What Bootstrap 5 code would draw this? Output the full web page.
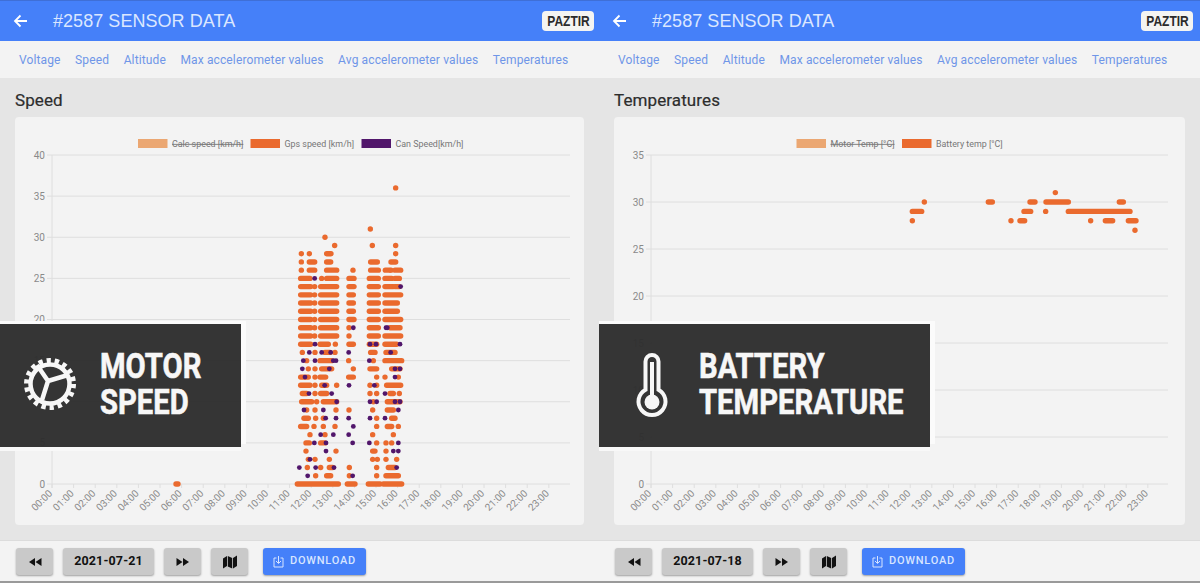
<!DOCTYPE html>
<html lang="en">
<head>
<meta charset="utf-8">
<title>Sensor data</title>
<link href="https://cdn.jsdelivr.net/npm/bootstrap@5.3.0/dist/css/bootstrap.min.css" rel="stylesheet">
<style>
html,body{height:583px;overflow:hidden;}
body{font-family:Roboto,"Liberation Sans",sans-serif;background:#e5e5e5;}
.sd-screens{width:1200px;height:583px;border-top:1px solid #3f6fd6;border-bottom:2px solid #9a9a9a;}
.sd-panel{position:relative;height:100%;background:#e5e5e5;}
.sd-left{width:599px;}
.sd-right{width:601px;}
.sd-head{flex:none;height:40px;background:#4580f9;padding:0 5px 0 13px;color:#dbe7ff;}
.sd-right .sd-head{padding-right:7px;}
.sd-title{font-family:"Liberation Sans",sans-serif;font-size:18px;letter-spacing:.05px;margin:0 0 0 25px;font-weight:400;flex:1 1 auto;line-height:40px;}
.sd-logo{width:52px;height:20px;background:#f4f4f2;border-radius:4px;color:#2b2b2b;font:700 15px/20px "Liberation Sans",sans-serif;text-align:center;white-space:nowrap;}
.sd-logo span{display:inline-block;transform:scaleX(.8);}
.sd-tabs{flex:none;height:37px;background:#f3f3f3;padding:0 19px;gap:14.5px;font-size:12px;}
.sd-tabs .nav-link{padding:0;color:#6f96e8;letter-spacing:.13px;white-space:nowrap;}
.sd-main{flex:none;height:462px;padding:13px 15px 15px;}
.sd-heading{font-size:17px;font-weight:400;color:#2d2d2d;margin:0 0 7px;line-height:19px;letter-spacing:.1px;-webkit-text-stroke:.2px #2d2d2d;}
.sd-chart{height:408px;background:#f3f3f3;border:0;border-radius:4px;overflow:hidden;}
.sd-chart svg{display:block;}
.sd-foot{flex:none;height:41px;background:#f3f3f3;border-top:1px solid #dcdcdc;padding:7px 16px 6px;gap:10px;}
.sd-btn{height:27px;width:37px;padding:0;background:#c9c9c9;border:0;border-radius:3px;box-shadow:0 1px 2px rgba(0,0,0,.35);color:#111;font-size:12.5px;font-weight:700;letter-spacing:.15px;}
.sd-date{width:91px;}
.sd-download{width:103px;margin-left:5px;background:#4580f9;color:#d8e5ff;font-size:11px;font-weight:500;letter-spacing:.75px;gap:6px;}
.sd-btn:hover{background:#c9c9c9;color:#111;}
.sd-download:hover{background:#4580f9;color:#d8e5ff;}
.sd-banner{position:absolute;top:323px;height:123px;left:0;background:rgba(46,46,46,.97);box-shadow:5px -3px 0 #fbfbfb,0 -3px 0 #fbfbfb,0 4px 0 #f8f8f8;color:#f7f7f7;}
.sd-banner-a{width:241px;}
.sd-banner-b{width:331px;}
.sd-banner-text{font-weight:700;font-size:35px;line-height:36px;transform:scaleX(.835);transform-origin:0 50%;white-space:nowrap;position:absolute;top:25px;left:100px;-webkit-text-stroke:.6px #f7f7f7;}
.sd-banner svg{position:absolute;}
.sd-ax{font:10px Roboto,sans-serif;fill:#8a8a8a;}
.sd-lg{font:8.9px Roboto,sans-serif;fill:#777;}
</style>
</head>
<body>
<div class="sd-screens d-flex">

  <section class="sd-panel sd-left d-flex flex-column">
    <header class="sd-head d-flex align-items-center">
      <svg width="15" height="14" viewBox="0 0 15 14"><path d="M14 7H2M7.5 1.5 2 7l5.500 5.500" fill="none" stroke="#fff" stroke-width="1.800"/></svg>
      <h1 class="sd-title">#2587 SENSOR DATA</h1>
      <div class="sd-logo"><span>PAZTIR</span></div>
    </header>
    <nav class="nav sd-tabs align-items-center flex-nowrap">
      <a class="nav-link" href="#">Voltage</a><a class="nav-link" href="#">Speed</a><a class="nav-link" href="#">Altitude</a><a class="nav-link" href="#">Max accelerometer values</a><a class="nav-link" href="#">Avg accelerometer values</a><a class="nav-link" href="#">Temperatures</a>
    </nav>
    <main class="sd-main">
      <h2 class="sd-heading">Speed</h2>
      <div class="card sd-chart" id="chartA"></div>
    </main>
    <footer class="sd-foot d-flex align-items-start">
      <button class="btn sd-btn d-flex align-items-center justify-content-center"><svg width="14" height="10" viewBox="0 0 14 10"><path d="M7 1v8L1 5zM13.500 1v8l-6-4z" fill="#111"/></svg></button>
      <button class="btn sd-btn sd-date">2021-07-21</button>
      <button class="btn sd-btn d-flex align-items-center justify-content-center"><svg width="14" height="10" viewBox="0 0 14 10"><path d="M.5 1v8l6-4zM7 1v8l6-4z" fill="#111"/></svg></button>
      <button class="btn sd-btn d-flex align-items-center justify-content-center"><svg width="14" height="14" viewBox="0 0 14 14"><path d="M0 3.500 4 1v10L0 13.500zM4.800 1l4.400 2v10.500L4.800 11.500zM10 3l4-2.500v10.500L10 13.500z" fill="#111"/></svg></button>
      <button class="btn sd-btn sd-download d-flex align-items-center justify-content-center"><svg width="11" height="13" viewBox="0 0 11 13"><path d="M3.500 3H1v9h9V3H7.500M5.500 1v7M3 6l2.500 2.500L8 6" fill="none" stroke="#d8e5ff" stroke-width="1"/></svg>DOWNLOAD</button>
    </footer>
    <aside class="sd-banner sd-banner-a">
      <svg style="left:20px;top:30px" width="60" height="60" viewBox="0 0 60 60">
        <circle cx="30" cy="30" r="23.500" fill="none" stroke="#f7f7f7" stroke-width="5" stroke-dasharray="4.300 3.900"/>
        <circle cx="30" cy="30" r="19.500" fill="none" stroke="#f7f7f7" stroke-width="4.500"/>
        <path d="M28 27 17 11M28 27 48 21M28 27 22 46" fill="none" stroke="#f7f7f7" stroke-width="4.500"/>
      </svg>
      <div class="sd-banner-text">MOTOR<br>SPEED</div>
    </aside>
  </section>

  <section class="sd-panel sd-right d-flex flex-column">
    <header class="sd-head d-flex align-items-center">
      <svg width="15" height="14" viewBox="0 0 15 14"><path d="M14 7H2M7.5 1.5 2 7l5.500 5.500" fill="none" stroke="#fff" stroke-width="1.800"/></svg>
      <h1 class="sd-title">#2587 SENSOR DATA</h1>
      <div class="sd-logo"><span>PAZTIR</span></div>
    </header>
    <nav class="nav sd-tabs align-items-center flex-nowrap">
      <a class="nav-link" href="#">Voltage</a><a class="nav-link" href="#">Speed</a><a class="nav-link" href="#">Altitude</a><a class="nav-link" href="#">Max accelerometer values</a><a class="nav-link" href="#">Avg accelerometer values</a><a class="nav-link" href="#">Temperatures</a>
    </nav>
    <main class="sd-main">
      <h2 class="sd-heading">Temperatures</h2>
      <div class="card sd-chart" id="chartB"></div>
    </main>
    <footer class="sd-foot d-flex align-items-start">
      <button class="btn sd-btn d-flex align-items-center justify-content-center"><svg width="14" height="10" viewBox="0 0 14 10"><path d="M7 1v8L1 5zM13.500 1v8l-6-4z" fill="#111"/></svg></button>
      <button class="btn sd-btn sd-date">2021-07-18</button>
      <button class="btn sd-btn d-flex align-items-center justify-content-center"><svg width="14" height="10" viewBox="0 0 14 10"><path d="M.5 1v8l6-4zM7 1v8l6-4z" fill="#111"/></svg></button>
      <button class="btn sd-btn d-flex align-items-center justify-content-center"><svg width="14" height="14" viewBox="0 0 14 14"><path d="M0 3.500 4 1v10L0 13.500zM4.800 1l4.400 2v10.500L4.800 11.500zM10 3l4-2.500v10.500L10 13.500z" fill="#111"/></svg></button>
      <button class="btn sd-btn sd-download d-flex align-items-center justify-content-center"><svg width="11" height="13" viewBox="0 0 11 13"><path d="M3.500 3H1v9h9V3H7.500M5.500 1v7M3 6l2.500 2.500L8 6" fill="none" stroke="#d8e5ff" stroke-width="1"/></svg>DOWNLOAD</button>
    </footer>
    <aside class="sd-banner sd-banner-b">
      <svg style="left:36px;top:29px" width="34" height="66" viewBox="0 0 34 66">
        <path d="M10.500 36.700V8.500a6.500 6.500 0 0 1 13 0V36.700a13.500 13.500 0 1 1-13 0z" fill="none" stroke="#f7f7f7" stroke-width="4"/>
        <path d="M17 9v40" stroke="#f7f7f7" stroke-width="4"/>
        <circle cx="17" cy="49" r="7.500" fill="#f7f7f7"/>
      </svg>
      <div class="sd-banner-text">BATTERY<br>TEMPERATURE</div>
    </aside>
  </section>
</div>

<script src="https://cdn.jsdelivr.net/npm/bootstrap@5.3.0/dist/js/bootstrap.bundle.min.js"></script>
<script>
const OR='#ea6a2e',PU='#51166b';
function buildChart(c){
  let s=`<svg width="${c.w}" height="408" viewBox="${c.x} 117 ${c.w} 408">`;
  const y0=484,y1=155,n=c.max/5,step=(y0-y1)/n;
  for(let i=0;i<=n;i++){
    const y=y0-i*step;
    s+=`<line x1="${c.ax-5}" x2="${c.right}" y1="${y}" y2="${y}" stroke="#dedede"/>`;
    s+=`<text class="sd-ax" x="${c.ax-7}" y="${y+3.500}" text-anchor="end">${i*5}</text>`;
  }
  s+=`<line x1="${c.ax}" x2="${c.ax}" y1="${y1}" y2="${y0+4}" stroke="#dedede"/>`;
  for(let h=0;h<24;h++){
    const x=c.ax+h*21.6;
    s+=`<line x1="${x}" x2="${x}" y1="${y0}" y2="${y0+4}" stroke="#dedede"/>`;
    s+=`<text class="sd-ax" text-anchor="end" transform="translate(${x+1} ${y0+10}) rotate(-45)">${String(h).padStart(2,'0')}:00</text>`;
  }
  c.legend.forEach(l=>{
    s+=`<rect x="${l.x}" y="139" width="29.500" height="9" fill="${l.col}"/>`;
    s+=`<text class="sd-lg" x="${l.x+34}" y="147"${l.off?' text-decoration="line-through"':''}>${l.t}</text>`;
  });
  const dot=(x,y,col,r)=>{s+=`<circle cx="${x}" cy="${y}" r="${r}" fill="${col}"/>`;};
  const seg=(a,b,y)=>{s+=`<line x1="${a}" x2="${b}" y1="${y}" y2="${y}" stroke="${OR}" stroke-width="5.400" stroke-linecap="round"/>`;};
  c.rows.forEach(r=>{
    const y=y0-r.v*(y0-y1)/c.max;
    (r.o||[]).forEach(p=>{
      const a=c.ox+(Array.isArray(p)?p[0]:p)/3, b=c.ox+(Array.isArray(p)?p[1]:p)/3;
      if(a===b)dot(a,y,OR,2.7);else seg(a,b,y);
    });
    (r.p||[]).forEach(p=>dot(c.ox+p/3,y,PU,2.4));
  });
  return s+'</svg>';
}
const speedRows=[
{v:36,o:[347]},{v:31,o:[271]},{v:30,o:[135]},
{v:29,o:[164,277,347]},
{v:28,o:[64,88,[140,153],347]},
{v:27,o:[64,[88,104],[140,152],[272,292],[333,347]]},
{v:26,o:[64,[88,104],[140,170],219,[272,295],[316,328],333,[345,362]]},
{v:25,o:[[62,90],125,[140,170],[207,222],[268,295],[315,335],[345,358]],p:[104]},
{v:24,o:[[62,92],104,[122,170],[207,222],[268,295],[315,340],[345,358]],p:[362]},
{v:23,o:[[62,92],104,[122,170],[207,220],[268,295],[315,362]]},
{v:22,o:[[62,92],104,[122,170],[207,220],[268,295],[315,352]]},
{v:21,o:[[62,92],104,[122,170],[207,220],[268,295],[315,352]]},
{v:20,o:[[62,92],104,[122,170],[207,222],[268,295],[315,362]]},
{v:19,o:[[62,92],104,[122,170],207,[268,295],[330,360]],p:[220,318,322]},
{v:18,o:[[62,92],104,[122,170],207,[268,295],[315,362]]},
{v:17,o:[[62,92],[120,145],166,[207,220],[268,290],[315,350]],p:[105,270,288,360]},
{v:16,o:[67,105,[135,150],165,[272,285],[318,345]],p:[88,125,152,206,332]},
{v:15,o:[80,[120,155],206,280,[315,365]],p:[70,105,160,168,268]},
{v:14,o:[85,105,[125,155],220,[270,290],[335,360]],p:[67,148,345,360]},
{v:13,o:[[62,85],105,[120,137],[206,220],290,315,355],p:[75,345]},
{v:12,o:[[62,90],105,[125,140],170,270,290,[320,362]],p:[207,283,134]},
{v:11,o:[[67,80],105,[122,140],270,290,[330,340],358],p:[87,155,315]},
{v:10,o:[[65,95],110,[130,170],280,[322,360]],p:[170,270,290,345,360]},
{v:9,o:[80,105,168,207,278,[322,340]],p:[72,130,355]},
{v:8,o:[[72,85],107,130,[335,345],290],p:[137,168,206,270,315]},
{v:7,o:[[62,80],102,130,165,290,[322,335],355],p:[220]},
{v:6,o:[90,135,278,340],p:[122,160,206]},
{v:5,o:[[78,88],[122,135],290,318,335],p:[103,138,218,268,355]},
{v:4,o:[78,168,[278,285],318],p:[138,340,355]},
{v:3,o:[85,105,148,278,292,318,350],p:[90]},
{v:2,o:[82,122,[148,158],208,290,[325,345]],p:[58,107,162,350]},
{v:1,o:[107,[140,152],208,290,[318,355]],p:[83,218]},
{v:0,o:[[52,175],[202,225],[265,300],[310,365]]},
{v:0,o:[[-312,-306]]}
];
document.getElementById('chartA').innerHTML=buildChart({x:15,w:570,ax:52,right:570,max:40,ox:280,rows:speedRows,legend:[
 {x:138,col:'#eba772',t:'Calc speed [km/h]',off:true},{x:250.500,col:OR,t:'Gps speed [km/h]'},{x:361.500,col:PU,t:'Can Speed[km/h]'}]});
document.getElementById('chartB').innerHTML=buildChart({x:614,w:571,ax:651,right:1168,max:35,ox:880,rows:[
{v:31,o:[526]},
{v:30,o:[133,[325,337],[450,465],[498,565],[718,730]]},
{v:29,o:[[97,125],[432,452],497,[565,750]]},
{v:28,o:[97,393,[420,434],632,[676,698],[745,768]]},
{v:27,o:[765]}],legend:[
 {x:796.500,col:'#eba772',t:'Motor Temp [°C]',off:true},{x:902,col:OR,t:'Battery temp [°C]'}]});
</script>
</body>
</html>
